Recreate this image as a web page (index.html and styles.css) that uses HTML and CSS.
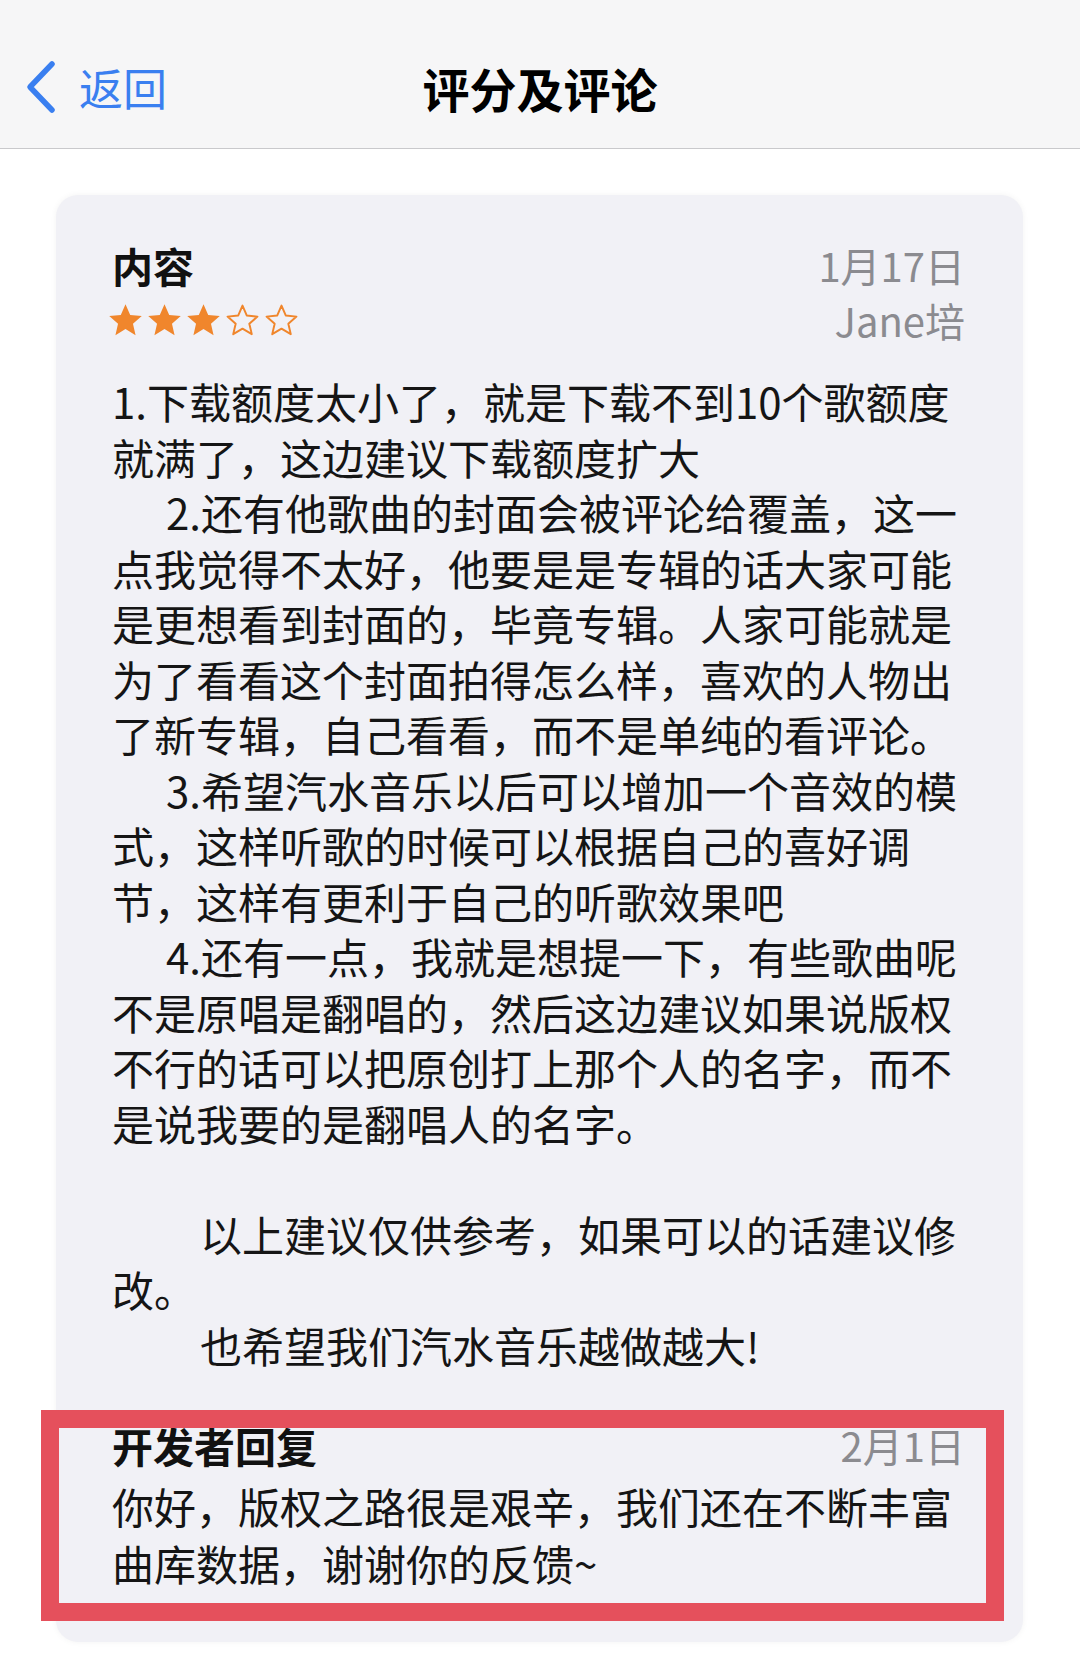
FILE: index.html
```html
<!DOCTYPE html>
<html lang="zh-CN">
<head>
<meta charset="utf-8">
<title>评分及评论</title>
<link rel="stylesheet" href="styles.css">
</head>
<body>
<header class="nav">
  <div class="back">
    <svg class="chev" width="34" height="54" viewBox="0 0 34 54"><path d="M28 4 L6 27 L28 50" fill="none" stroke="#3a7ff0" stroke-width="5.5" stroke-linecap="round" stroke-linejoin="round"/></svg>
    <span class="back-text">返回</span>
  </div>
  <div class="title">评分及评论</div>
  <div></div>
</header>

<main class="card">
  <div class="top">
    <div class="top-left">
      <div class="heading">内容</div>
      <div class="stars">
        <svg class="star" viewBox="0 0 24 24"><polygon points="12,2 14.9,8.6 22,9.3 16.6,14 18.2,21 12,17.3 5.8,21 7.4,14 2,9.3 9.1,8.6" fill="#f0862c"/></svg>
        <svg class="star" viewBox="0 0 24 24"><polygon points="12,2 14.9,8.6 22,9.3 16.6,14 18.2,21 12,17.3 5.8,21 7.4,14 2,9.3 9.1,8.6" fill="#f0862c"/></svg>
        <svg class="star" viewBox="0 0 24 24"><polygon points="12,2 14.9,8.6 22,9.3 16.6,14 18.2,21 12,17.3 5.8,21 7.4,14 2,9.3 9.1,8.6" fill="#f0862c"/></svg>
        <svg class="star" viewBox="0 0 24 24"><polygon points="12,2.8 14.6,8.9 21.2,9.6 16.2,14 17.7,20.4 12,17 6.3,20.4 7.8,14 2.8,9.6 9.4,8.9" fill="none" stroke="#f0862c" stroke-width="1.2" stroke-linejoin="round"/></svg>
        <svg class="star" viewBox="0 0 24 24"><polygon points="12,2.8 14.6,8.9 21.2,9.6 16.2,14 17.7,20.4 12,17 6.3,20.4 7.8,14 2.8,9.6 9.4,8.9" fill="none" stroke="#f0862c" stroke-width="1.2" stroke-linejoin="round"/></svg>
      </div>
    </div>
    <div class="top-right">
      <div class="meta">1月17日</div>
      <div class="meta">Jane培</div>
    </div>
  </div>

  <div class="body">
    <div class="ln">1.下载额度太小了，就是下载不到10个歌额度</div>
    <div class="ln">就满了，这边建议下载额度扩大</div>
    <div class="ln in1">2.还有他歌曲的封面会被评论给覆盖，这一</div>
    <div class="ln">点我觉得不太好，他要是是专辑的话大家可能</div>
    <div class="ln">是更想看到封面的，毕竟专辑。人家可能就是</div>
    <div class="ln">为了看看这个封面拍得怎么样，喜欢的人物出</div>
    <div class="ln">了新专辑，自己看看，而不是单纯的看评论。</div>
    <div class="ln in1">3.希望汽水音乐以后可以增加一个音效的模</div>
    <div class="ln">式，这样听歌的时候可以根据自己的喜好调</div>
    <div class="ln">节，这样有更利于自己的听歌效果吧</div>
    <div class="ln in1">4.还有一点，我就是想提一下，有些歌曲呢</div>
    <div class="ln">不是原唱是翻唱的，然后这边建议如果说版权</div>
    <div class="ln">不行的话可以把原创打上那个人的名字，而不</div>
    <div class="ln">是说我要的是翻唱人的名字。</div>
    <div class="ln blank"></div>
    <div class="ln in2">以上建议仅供参考，如果可以的话建议修</div>
    <div class="ln">改。</div>
    <div class="ln in2">也希望我们汽水音乐越做越大!</div>
  </div>

  <section class="reply">
    <div class="reply-head">
      <div class="heading">开发者回复</div>
      <div class="meta">2月1日</div>
    </div>
    <div class="reply-text">
      <div class="rl">你好，版权之路很是艰辛，我们还在不断丰富</div>
      <div class="rl">曲库数据，谢谢你的反馈~</div>
    </div>
  </section>

  <div class="mark"></div>
</main>
</body>
</html>
```

FILE: styles.css
```css
html, body {
  margin: 0;
  padding: 0;
  background: #ffffff;
}
body {
  font-family: "Noto Sans CJK SC", "Noto Sans", sans-serif;
  color: #151515;
  width: 1080px;
}
.nav {
  box-sizing: border-box;
  height: 149px;
  padding-top: 24px;
  background: #f6f6f7;
  border-bottom: 1px solid #c9c9cc;
  display: grid;
  grid-template-columns: 1fr auto 1fr;
  align-items: center;
}
.back {
  display: flex;
  align-items: center;
  padding-left: 24px;
  padding-top: 2px;
}
.chev {
  display: block;
}
.back-text {
  font-size: 44px;
  color: #3a7ff0;
  margin-left: 21px;
  line-height: 1;
}
.title {
  font-size: 47px;
  font-weight: 700;
  color: #000;
  line-height: 1;
  padding-top: 2px;
}
.card {
  position: relative;
  margin: 46px 57px 30px 56px;
  background: #f1f1f6;
  border-radius: 22px;
  box-shadow: 0 0 6px rgba(0, 0, 0, 0.05);
  padding: 43px 58px 51px 56px;
}
.top {
  display: flex;
  justify-content: space-between;
}
.heading {
  font-size: 41px;
  font-weight: 700;
  line-height: 55px;
  color: #111;
}
.stars {
  display: flex;
  align-items: center;
  height: 55px;
  gap: 0;
  margin-left: -6px;
}
.star {
  width: 39px;
  height: 39px;
  display: block;
}
.top-right {
  text-align: right;
}
.meta {
  font-size: 40px;
  line-height: 55px;
  color: #8b8b90;
}
.body {
  margin-top: 25px;
}
.ln {
  font-size: 42px;
  line-height: 55.5px;
  height: 55.5px;
  white-space: nowrap;
  color: #151515;
}
.in1 {
  text-indent: 54px;
}
.in2 {
  text-indent: 88px;
}
.reply {
  margin-top: 46px;
}
.reply-head {
  display: flex;
  justify-content: space-between;
}
.reply-text {
  margin-top: 4px;
}
.rl {
  font-size: 42px;
  line-height: 57px;
  white-space: nowrap;
  color: #151515;
}
.mark {
  position: absolute;
  left: -15px;
  top: 1215px;
  width: 927px;
  height: 175px;
  border: 18px solid #e5505c;
  pointer-events: none;
}
```
